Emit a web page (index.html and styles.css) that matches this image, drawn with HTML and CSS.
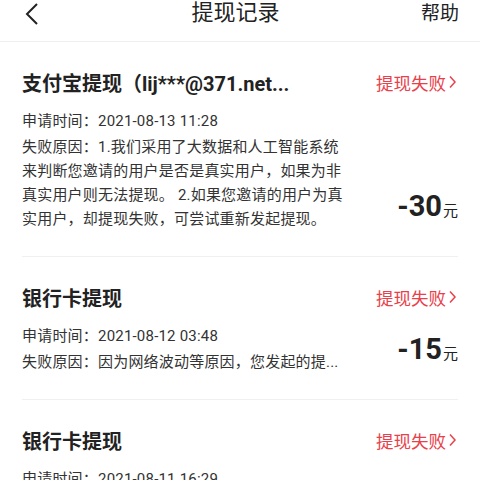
FILE: index.html
```html
<!DOCTYPE html>
<html lang="zh-CN">
<head>
<meta charset="utf-8">
<link rel="stylesheet" href="styles.css">
</head>
<body>
<header class="topbar">
  <svg class="back" width="16" height="24" viewBox="0 0 16 24"><path d="M13 2 L3 12 L13 22" fill="none" stroke="#222" stroke-width="2"/></svg>
  <h1 class="title">提现记录</h1>
  <span class="help">帮助</span>
</header>
<main class="list">
  <section class="record">
    <div class="record-head">
      <h2 class="record-title">支付宝提现（lij***@371.net...</h2>
      <span class="status">提现失败<svg class="chev" width="10" height="14" viewBox="0 0 10 14"><path d="M3 1.5 L8 7 L3 12.5" fill="none" stroke="#e8414b" stroke-width="1.5"/></svg></span>
    </div>
    <div class="record-body">
      <div class="info">
        <p class="time">申请时间：2021-08-13 11:28</p>
        <p class="reason">失败原因：1.我们采用了大数据和人工智能系统来判断您邀请的用户是否是真实用户，如果为非真实用户则无法提现。 2.如果您邀请的用户为真实用户，却提现失败，可尝试重新发起提现。</p>
      </div>
      <div class="amount"><span class="num">-30</span><span class="unit">元</span></div>
    </div>
  </section>
  <section class="record">
    <div class="record-head">
      <h2 class="record-title">银行卡提现</h2>
      <span class="status">提现失败<svg class="chev" width="10" height="14" viewBox="0 0 10 14"><path d="M3 1.5 L8 7 L3 12.5" fill="none" stroke="#e8414b" stroke-width="1.5"/></svg></span>
    </div>
    <div class="record-body">
      <div class="info">
        <p class="time">申请时间：2021-08-12 03:48</p>
        <p class="reason">失败原因：因为网络波动等原因，您发起的提...</p>
      </div>
      <div class="amount"><span class="num">-15</span><span class="unit">元</span></div>
    </div>
  </section>
  <section class="record">
    <div class="record-head">
      <h2 class="record-title">银行卡提现</h2>
      <span class="status">提现失败<svg class="chev" width="10" height="14" viewBox="0 0 10 14"><path d="M3 1.5 L8 7 L3 12.5" fill="none" stroke="#e8414b" stroke-width="1.5"/></svg></span>
    </div>
    <div class="record-body">
      <div class="info">
        <p class="time">申请时间：2021-08-11 16:29</p>
        <p class="reason">失败原因：因为网络波动等原因，您发起的提...</p>
      </div>
      <div class="amount"><span class="num">-15</span><span class="unit">元</span></div>
    </div>
  </section>
</main>
</body>
</html>
```
FILE: styles.css
```css
* { box-sizing: border-box; }
html, body { margin: 0; padding: 0; background: #fff; }
body {
  font-family: Roboto, "Noto Sans CJK SC", sans-serif;
  color: #222;
  width: 480px;
  height: 480px;
  overflow: hidden;
}
.topbar {
  height: 42px;
  border-bottom: 1px solid #efefef;
  display: flex;
  align-items: flex-start;
  justify-content: space-between;
  padding: 0 21px 0 24px;
}
.back { margin-top: 2px; }
.title {
  margin: 0;
  font-size: 22px;
  font-weight: 400;
  line-height: 26px;
  color: #222;
  padding-left: 10px;
}
.help {
  font-size: 19px;
  line-height: 28px;
  color: #222;
}
.list { padding: 0 22px; }
.record {
  border-bottom: 1px solid #f0f0f0;
  padding: 28px 0 25px;
}
.record-head {
  display: flex;
  align-items: center;
  justify-content: space-between;
  height: 28px;
}
.record-title {
  margin: 0;
  font-size: 20px;
  font-weight: 700;
  line-height: 28px;
  color: #222;
}
.status {
  display: flex;
  align-items: center;
  font-size: 17.5px;
  color: #e8414b;
  margin-top: -4px;
}
.chev { margin-left: 1px; margin-right: 1px; }
.record-body {
  display: flex;
  justify-content: space-between;
  align-items: flex-end;
  margin-top: 11px;
}
.info { width: 326px; }
.time, .reason {
  margin: 0;
  font-size: 15px;
  line-height: 24px;
  color: #333;
  letter-spacing: 0.2px;
}
.reason { margin-top: 2px; }
.amount {
  display: flex;
  align-items: baseline;
  margin-bottom: 4px;
  line-height: 32px;
}
.num {
  font-size: 29px;
  font-weight: 700;
  color: #222;
}
.unit {
  font-size: 15px;
  color: #222;
  margin-left: 1px;
}
```
